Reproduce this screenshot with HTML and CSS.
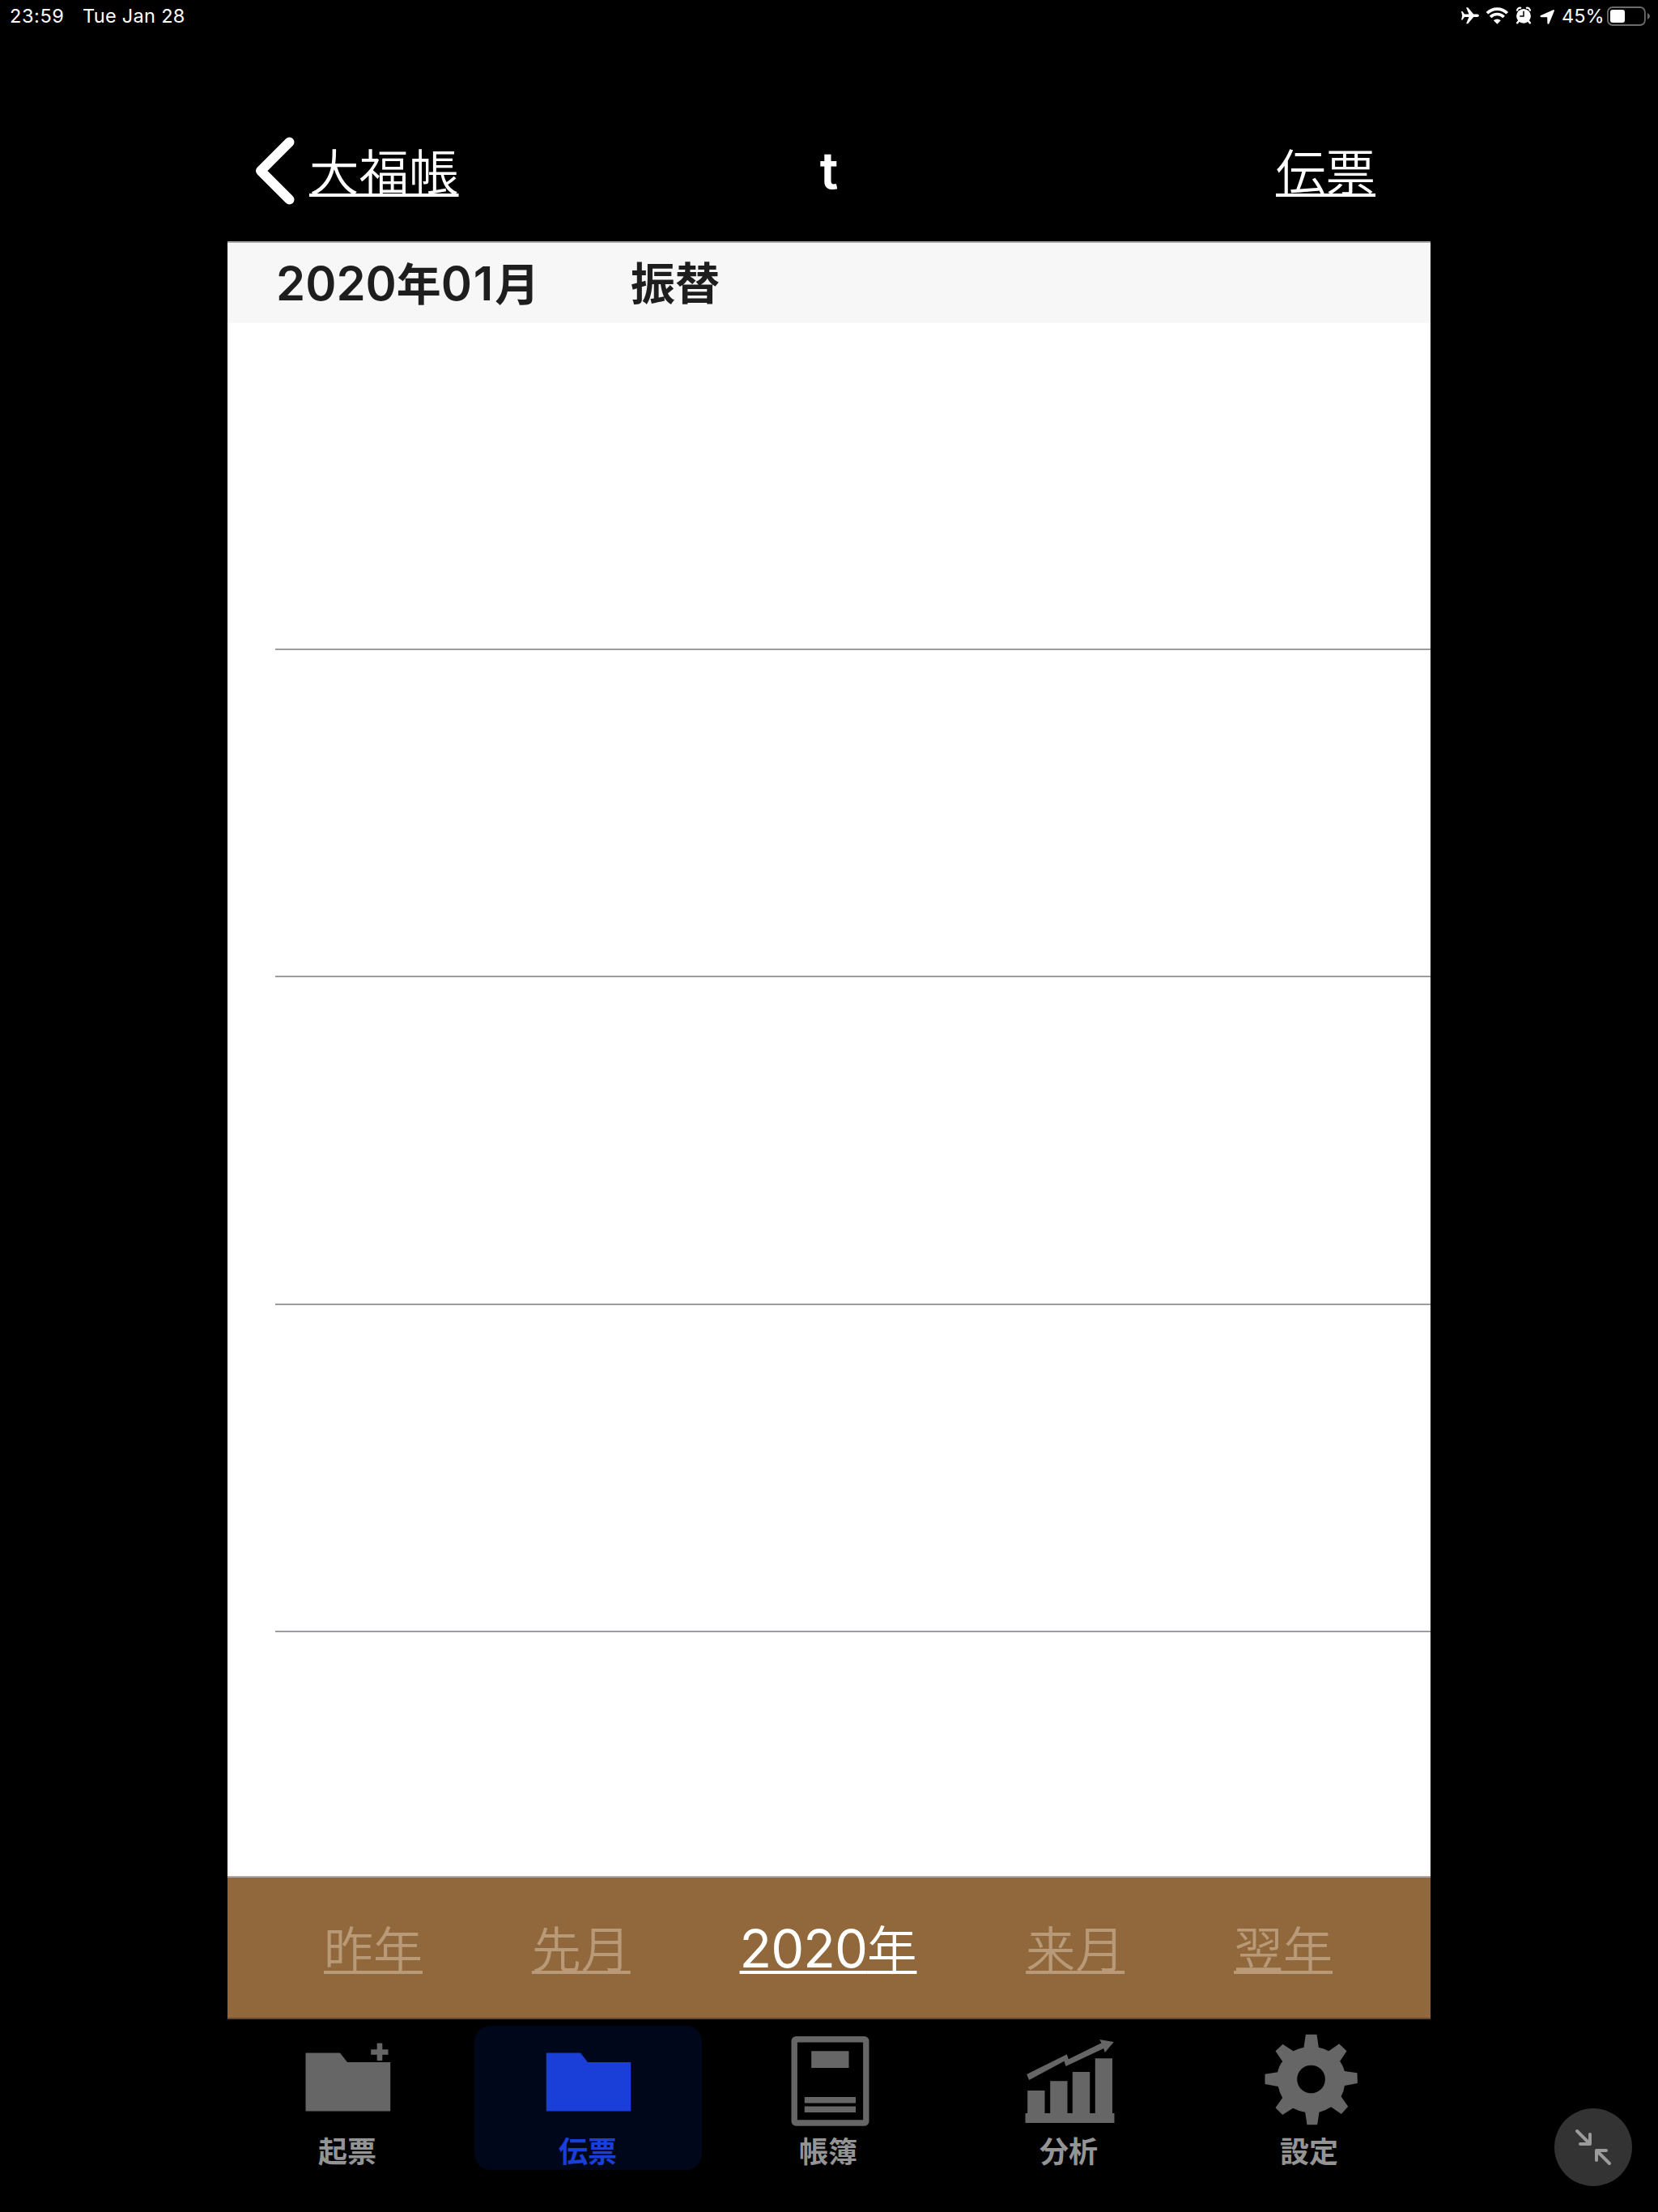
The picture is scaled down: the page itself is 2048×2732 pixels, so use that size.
FILE: index.html
```html
<!DOCTYPE html>
<html lang="ja">
<head>
<meta charset="utf-8">
<title>伝票</title>
<link rel="stylesheet" href="styles.css">
</head>
<body>
<div class="screen">
  <header class="status">
    <span class="time">23:59</span>
    <span class="date">Tue Jan 28</span>
    <svg class="status-icons" viewBox="0 0 118 40" width="118" height="40" fill="#fff">
      <path d="M0 14h1.500l2.500 3.500h5.500L6 9.300h2.200l7 8.200H20q2 .8 2 1.800t-2 1.800h-4.800l-7 8.200H6l3.500-8.200H4L1.500 24.600H0l1.200-5.300z"/>
      <g fill="none" stroke="#fff" stroke-width="3.700">
        <path d="M31.900 16.300a17.400 17.400 0 0 1 24.900 0"/>
        <path d="M36.100 21a11.500 11.500 0 0 1 16.500 0"/>
      </g>
      <path d="M39.900 25.300a6.300 6.300 0 0 1 8.900 0L44.400 29.800z"/>
      <g>
        <circle cx="77" cy="19.800" r="8.900"/>
        <path d="M69 13.600a3.600 3.600 0 0 1 5-3.700M85 13.600a3.600 3.600 0 0 0-5-3.700" fill="none" stroke="#fff" stroke-width="2.200"/>
        <path d="M71 26l-1.800 2.200M83 26l1.800 2.200" stroke="#fff" stroke-width="2.600" stroke-linecap="round"/>
        <path d="M77 13.800v6.300h-4.800" fill="none" stroke="#000" stroke-width="1.500"/>
      </g>
      <path d="M113.500 12.300c1-.4 1.800.3 1.400 1.300L108.500 29c-.5 1.200-2 1-2.100-.3l-.2-7.400-7.400-.1c-1.500 0-1.700-1.600-.5-2.100z"/>
    </svg>
    <span class="percent">45%</span>
    <svg class="battery" viewBox="0 0 54 26" width="54" height="26">
      <rect x="1.900" y="2" width="46" height="22" rx="6" fill="none" stroke="#6b6b6b" stroke-width="1.800"/>
      <rect x="5" y="5" width="18" height="16" rx="3" fill="#fff"/>
      <path d="M51 9q3 1.300 3 4t-3 4z" fill="#6b6b6b"/>
    </svg>
  </header>

  <main class="app">
    <nav class="navbar">
      <a class="back">
        <svg viewBox="0 0 50 84" width="50" height="84" fill="none" stroke="#fff" stroke-width="12" stroke-linecap="round" stroke-linejoin="round"><path d="M42.500 6.500L7 42l35.500 35.500"/></svg>
        <span class="link">大福帳</span>
      </a>
      <h1 class="title">t</h1>
      <a class="link right">伝票</a>
    </nav>
    <div class="section">
      <span class="month"><span class="num">2020</span>年<span class="num loose">01</span>月</span>
      <span class="kind">振替</span>
    </div>
    <ul class="list"><li></li><li></li><li></li><li></li></ul>
    <div class="toolbar">
      <a class="link dim">昨年</a>
      <a class="link dim">先月</a>
      <a class="link year"><span class="year-num">2020</span>年</a>
      <a class="link dim">来月</a>
      <a class="link dim">翌年</a>
    </div>
    <div class="tabs">
      <a class="tab">
        <svg viewBox="0 0 120 124" width="120" height="124" fill="#666"><path d="M7.500 33.500H50L59 45h53.200v60.500H7.500z"/><path d="M95.700 21.500h6.600v7.800h7.200v6.500h-7.200V43h-6.600v-7.200h-7.500v-6.500h7.500z"/></svg>
        <span>起票</span>
      </a>
      <a class="tab active">
        <svg viewBox="0 0 120 124" width="120" height="124" fill="#1a3fd8"><path d="M7.800 33.500H50L59 45h53.200v60.500H7.800z"/></svg>
        <span>伝票</span>
      </a>
      <a class="tab">
        <svg viewBox="0 0 120 124" width="120" height="124" fill="#666"><rect x="17.200" y="16.800" width="88.600" height="103.200" rx="2" fill="none" stroke="#666" stroke-width="7.400"/><path d="M38.200 31.300h46.300V52H38.200zM29.800 88H93v7.500H29.800zM29.800 99.500H93v7.500H29.800z"/></svg>
        <span>帳簿</span>
      </a>
      <a class="tab">
        <svg viewBox="0 0 120 124" width="120" height="124" fill="#666"><path d="M5.500 108h110v12H5.500zM8.200 80h21.300v29H8.200zM36.200 68.300h21.300V109H36.200zM63.800 57h21.400v52H63.800zM91.800 40.300H113V109H91.800z"/><path d="M7.200 60L56.800 35.300l2 6L99.500 21.300 97.200 17l17.600 3-11 13-1.600-5-46.700 22-2-6.300L10.200 67z"/></svg>
        <span>分析</span>
      </a>
      <a class="tab">
        <svg viewBox="52.500 6 360 372" width="120" height="124" fill="#666"><path fill-rule="evenodd" d="M217 38H258L265 86Q285 90 302 100L341 73 369 100 344 137Q356 154 361 174L408 181 409 219 361 228Q359 249 348 268L374 305 349 333 311 307Q290 321 267 326L260 373H222L215 326Q190 322 170 311L131 336 105 310 131 273Q119 253 115 231L66 222V185L113 178Q117 156 131 138L105 100 132 74 171 100Q190 89 210 86ZM237 152a52 52 0 1 0 .1 0z"/></svg>
        <span>設定</span>
      </a>
    </div>
  </main>

  <button class="shrink" aria-label="縮小">
    <svg viewBox="0 0 96 96" width="96" height="96" fill="none" stroke="#9b9b9b" stroke-width="4" stroke-linecap="round" stroke-linejoin="round"><path d="M28 28l16 16M44 32v12H32M68 68L52 52M52 64V52h12"/></svg>
  </button>
</div>
</body>
</html>
```

FILE: styles.css
```css
* { box-sizing: border-box; }
body { margin: 0; background: #000; }
.screen {
  position: relative;
  width: 2048px;
  height: 2732px;
  overflow: hidden;
  background: #000;
  color: #fff;
  font-family: Inter, "Noto Sans CJK JP", sans-serif;
}
.screen svg { flex-shrink: 0; }
.status {
  display: flex;
  align-items: center;
  height: 40px;
  padding-left: 12px;
  font-size: 23.500px;
  font-weight: 430;
  white-space: nowrap;
}
.status span { line-height: 28px; padding-bottom: 1px; }
.time { width: 90px; letter-spacing: .6px; }
.date { width: 1703px; letter-spacing: .3px; }
.status-icons { width: 118px; margin-right: 6px; }
.percent { width: 55px; }
.app {
  display: flex;
  flex-direction: column;
  width: 1486px;
  height: 2692px;
  margin-left: 281px;
}
.navbar {
  display: grid;
  grid-template-columns: 1fr auto 1fr;
  align-items: center;
  height: 260px;
  padding: 83px 34px 0;
  border-bottom: 2px solid #aaa;
}
.back { display: flex; align-items: center; gap: 17px; }
.link {
  padding-bottom: 2px;
  font-family: "Noto Sans CJK JP", sans-serif;
  font-size: 61.500px;
  font-weight: 350;
  line-height: 90px;
  text-decoration: underline;
  text-decoration-thickness: 4px;
  text-underline-offset: 3px;
  text-decoration-skip-ink: none;
  white-space: nowrap;
}
.title { margin: 0; padding-top: 1px; font-size: 64px; font-weight: 600; line-height: 90px; }
.right { justify-self: end; margin-right: 34px; }
.section {
  display: flex;
  align-items: center;
  height: 99px;
  padding: 1px 0 0 60px;
  background: #f7f7f7;
  color: #1e1e1e;
  font-size: 55px;
  font-weight: 600;
  line-height: 80px;
}
.month { width: 438px; }
.num { font-size: 58px; }
.loose { letter-spacing: 1.800px; }
.list { height: 1918px; margin: 0; padding: 0 0 0 59px; list-style: none; background: #fff; }
.list li { height: 404.400px; border-bottom: 2px solid #9b9ba0; }
.list li:first-child { height: 404px; }
.toolbar {
  display: flex;
  align-items: center;
  justify-content: space-between;
  height: 177px;
  padding: 0 121px 0 119px;
  background: #91683c;
  border-top: 2px solid #aaa;
  border-bottom: 2px solid #65492a;
}
.dim { color: #b99a78; font-size: 61px; }
.year { padding-bottom: 0; text-underline-offset: 4px; }
.year-num { font-family: Inter, sans-serif; font-size: 65px; font-weight: 400; letter-spacing: -1px; }
.tabs { display: grid; grid-template-columns: repeat(5, 281px); gap: 16px; padding: 8px 8px 0; }
.tab {
  display: flex;
  flex-direction: column;
  align-items: center;
  height: 178px;
  border-radius: 20px;
  color: #949494;
  font-size: 36px;
  font-weight: 600;
  line-height: 54px;
}
.tab span { padding-top: 5px; margin-left: -1px; }
.active { background: #00071a; color: #1a3fd8; }
.shrink {
  position: absolute;
  left: 1920px;
  top: 2604px;
  width: 96px;
  height: 96px;
  padding: 0;
  border: 0;
  border-radius: 50%;
  background: #333;
}
.shrink svg { display: block; }
```
